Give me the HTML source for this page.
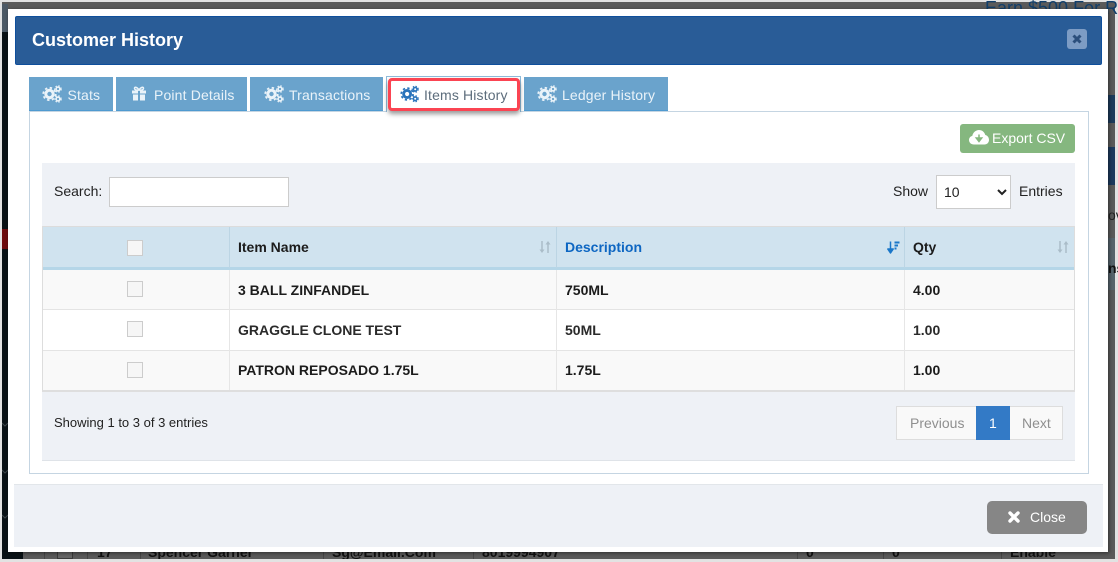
<!DOCTYPE html>
<html><head><meta charset="utf-8"><style>
html,body{margin:0;padding:0}
body{width:1118px;height:562px;position:relative;overflow:hidden;background:#e2e2e2;font-family:"Liberation Sans",sans-serif;font-size:14px;color:#222}
.a{position:absolute;box-sizing:border-box}
.t{position:absolute;white-space:nowrap;line-height:20px}
.tab{position:absolute;top:77px;height:34px;background:#6aa3cc;border-bottom:1px solid #4f9ad0;color:#eaf3f9;box-sizing:border-box}
.tab svg{position:absolute;top:8px;color:#eaf3f9}
.tab span{position:absolute;top:8px;line-height:20px;white-space:nowrap;letter-spacing:.15px}
.b{font-weight:bold;color:#1c1c1c}
.cb{position:absolute;left:127px;width:16px;height:16px;border:1px solid #ccc;background:#f6f6f6;box-sizing:border-box}
.v{position:absolute;width:1px;background:#e6e6e6}
.h{position:absolute;left:42px;width:1033px;height:1px;background:#e4e4e4}
.bl{position:absolute;top:540px;height:19px;width:1px;background:#474747}
</style></head><body>
<svg width="0" height="0" style="position:absolute"><defs>
<symbol id="g" viewBox="0 0 20 18">
<circle cx="7.500" cy="9" r="3.700" fill="none" stroke="currentColor" stroke-width="3"/>
<circle cx="7.500" cy="9" r="6.200" fill="none" stroke="currentColor" stroke-width="1.800" stroke-dasharray="2.400 2.470"/>
<circle cx="16" cy="4" r="1.900" fill="none" stroke="currentColor" stroke-width="1.600"/>
<circle cx="16" cy="4" r="3.200" fill="none" stroke="currentColor" stroke-width="1.100" stroke-dasharray="1.500 1.500"/>
<circle cx="16" cy="14" r="1.900" fill="none" stroke="currentColor" stroke-width="1.600"/>
<circle cx="16" cy="14" r="3.200" fill="none" stroke="currentColor" stroke-width="1.100" stroke-dasharray="1.500 1.500"/>
</symbol>
<symbol id="s" viewBox="0 0 12 12">
<path d="M3 0V9.500M9 12V2.500" stroke="currentColor" stroke-width="1.500" fill="none"/>
<path d="M0.500 8.500H5.500L3 12ZM6.500 3.500H11.500L9 0Z" fill="currentColor"/>
</symbol>
</defs></svg>

<!-- background page -->
<div class="a" style="left:2px;top:2px;width:1113px;height:557px;background:#5b5b5b"></div>
<div class="a" style="left:2px;top:10px;width:6px;height:549px;background:#0a1216"></div>
<div class="a" style="left:2px;top:4px;width:6px;height:28px;background:#4d5a66"></div>
<div class="a" style="left:2px;top:229px;width:6px;height:20px;background:#6e0c0e"></div>
<svg class="a" style="left:2px;top:420px" width="6" height="102"><path d="M0 3L3 6L6 3M0 50L3 53L6 50M0 95L3 98L6 95" fill="none" stroke="#3d4549" stroke-width="1"/></svg>
<div class="a" style="left:8px;top:552px;width:15px;height:7px;background:#0a1216"></div>
<div class="a" style="left:1108px;top:95px;width:7px;height:28px;background:#1c3b5c"></div>
<div class="a" style="left:1108px;top:147px;width:7px;height:38px;background:#1c3a5e"></div>
<div class="a" style="left:1108px;top:238px;width:7px;height:52px;background:#56646c"></div>
<div class="t" style="left:1108px;top:205px;color:#222">ov</div>
<div class="t" style="left:1108px;top:258px;color:#111;font-weight:bold">ns</div>
<div class="t" style="left:985px;top:-2px;font-size:18px;color:#123f6b">Earn $500 For R</div>
<div class="bl" style="left:44px"></div><div class="bl" style="left:87px"></div><div class="bl" style="left:140px"></div><div class="bl" style="left:323px"></div><div class="bl" style="left:473px"></div><div class="bl" style="left:797px"></div><div class="bl" style="left:883px"></div><div class="bl" style="left:1001px"></div>
<div class="a" style="left:57px;top:545px;width:16px;height:14px;border:1px solid #3c3c3c;background:#666"></div>
<div style="position:absolute;left:0;top:0;width:1118px;height:559px;overflow:hidden">
<div class="t b" style="left:148px;top:542px;color:#111">Spencer Garner</div>
<div class="t b" style="left:97px;top:542px;color:#111">17</div>
<div class="t b" style="left:332px;top:542px;color:#111">Sg@Email.Com</div>
<div class="t b" style="left:482px;top:542px;color:#111">8019994907</div>
<div class="t b" style="left:806px;top:542px;color:#111">0</div>
<div class="t b" style="left:892px;top:542px;color:#111">0</div>
<div class="t b" style="left:1010px;top:542px;color:#111">Enable</div>
</div>

<!-- modal -->
<div class="a" style="left:8px;top:9px;width:1100px;height:543px;background:#fff;box-shadow:1px 1px 4px rgba(0,0,0,.5)"></div>
<div class="a" style="left:15px;top:16px;width:1087px;height:49px;background:#295c97;border:1px solid #0f4f9c;border-radius:2px"></div>
<div class="t" style="left:32px;top:30px;font-size:18px;font-weight:bold;color:#fff">Customer History</div>
<div class="a" style="left:1067px;top:29px;width:20px;height:20px;background:#7d9cc4;border-radius:3px"></div>
<svg class="a" style="left:1072px;top:34px" width="10" height="10" viewBox="0 0 10 10"><path d="M1.500 1.500L8.500 8.500M8.500 1.500L1.500 8.500" stroke="#2c4f7c" stroke-width="3"/></svg>

<!-- tab panel -->
<div class="a" style="left:29px;top:111px;width:1060px;height:363px;border:1px solid #c5d5e2;background:#fff"></div>

<div class="tab" style="left:29px;width:84px"><svg style="left:13px" width="20" height="18"><use href="#g"/></svg><span style="left:38.500px">Stats</span></div>
<div class="tab" style="left:116px;width:131px"><svg style="left:15px;top:9px" width="16" height="15" viewBox="0 0 16 15"><path d="M1 4.500H7V7.500H1ZM9 4.500H15V7.500H9ZM2 8.500H7V14.500H2ZM9 8.500H14V14.500H9Z" fill="#eaf3f9"/><path d="M8 4C6 1 3.500 0.500 3.500 2.300S6 4.500 8 4C10 1 12.500 0.500 12.500 2.300S10 4.500 8 4Z" fill="none" stroke="#eaf3f9" stroke-width="1.500"/></svg><span style="left:38px">Point Details</span></div>
<div class="tab" style="left:250px;width:133px"><svg style="left:14px" width="20" height="18"><use href="#g"/></svg><span style="left:39px">Transactions</span></div>
<div class="tab" style="left:524px;width:144px"><svg style="left:13px" width="20" height="18"><use href="#g"/></svg><span style="left:38px">Ledger History</span></div>

<!-- active tab highlight -->
<div class="a" style="left:386px;top:76px;width:135px;height:36px;background:#fff;border:1px solid #8fbbda;border-bottom:none"></div>
<div class="a" style="left:388px;top:78px;width:132px;height:33px;background:#fff;border:3px solid #fb4452;border-radius:4px;box-shadow:0 3px 5px rgba(0,0,0,.4)"></div>
<svg class="a" style="left:400px;top:85px;color:#2a74bb" width="19" height="18"><use href="#g"/></svg>
<div class="t" style="left:424px;top:85px;color:#5d6d7c;letter-spacing:.15px">Items History</div>

<!-- export -->
<div class="a" style="left:960px;top:124px;width:115px;height:29px;background:#85b77f;border-radius:3px"></div>
<svg class="a" style="left:969px;top:130px" width="20" height="15" viewBox="0 0 20 15"><path d="M5 14.500C2 14.500 0 12.500 0 10C0 7.800 1.500 6.300 3.300 5.900C4 2.500 6.800 0 10 0C13 0 15.500 2 16.300 5C18.500 5.500 20 7.400 20 10C20 12.500 18 14.500 15.500 14.500Z" fill="#fff"/><path d="M10 4.500V10.500M7.300 8L10 11.500L12.700 8Z" fill="#85b77f" stroke="#85b77f" stroke-width="1.500"/></svg>
<div class="t" style="left:992px;top:128px;color:#fff">Export CSV</div>

<!-- table wrapper -->
<div class="a" style="left:42px;top:163px;width:1033px;height:298px;background:#eef1f6;border-bottom:1px solid #dfe3e8"></div>
<div class="t" style="left:54px;top:181px">Search:</div>
<div class="a" style="left:109px;top:177px;width:180px;height:30px;background:#fff;border:1px solid #ccc"></div>
<div class="t" style="left:893px;top:181px">Show</div>
<select class="a" style="left:936px;top:175px;width:75px;height:34px;background:#fff;border:1px solid #ccc;font:14px 'Liberation Sans',sans-serif;color:#222;padding:0 3px;border-radius:0"><option>10</option></select>
<div class="t" style="left:1019px;top:181px">Entries</div>

<!-- table -->
<div class="a" style="left:42px;top:226px;width:1033px;height:44px;background:#d0e3ef;border-top:1px solid #dcdcdc;border-bottom:3px solid #b5d6e8"></div>
<div class="a" style="left:42px;top:270px;width:1033px;height:40px;background:#f9f9f9"></div>
<div class="a" style="left:42px;top:310px;width:1033px;height:40px;background:#fff"></div>
<div class="a" style="left:42px;top:350px;width:1033px;height:40px;background:#f9f9f9"></div>
<div class="h" style="top:309px"></div>
<div class="h" style="top:350px"></div>
<div class="a" style="left:42px;top:390px;width:1033px;height:2px;background:#dedede"></div>
<div class="v" style="left:42px;top:226px;height:165px;background:#ddd"></div>
<div class="v" style="left:1074px;top:226px;height:165px;background:#ddd"></div>
<div class="v" style="left:229px;top:227px;height:41px;background:#bcd5e4"></div>
<div class="v" style="left:556px;top:227px;height:41px;background:#bcd5e4"></div>
<div class="v" style="left:904px;top:227px;height:41px;background:#bcd5e4"></div>
<div class="v" style="left:229px;top:270px;height:120px"></div>
<div class="v" style="left:556px;top:270px;height:120px"></div>
<div class="v" style="left:904px;top:270px;height:120px"></div>

<div class="cb" style="top:240px"></div>
<div class="cb" style="top:281px"></div>
<div class="cb" style="top:321px"></div>
<div class="cb" style="top:362px"></div>

<div class="t b" style="left:238px;top:237px">Item Name</div>
<div class="t" style="left:565px;top:237px;font-weight:bold;color:#0d66c2">Description</div>
<div class="t b" style="left:913px;top:237px">Qty</div>
<svg class="a" style="left:539px;top:241px;color:#aabcc8" width="12" height="12"><use href="#s"/></svg>
<svg class="a" style="left:1057px;top:241px;color:#aabcc8" width="12" height="12"><use href="#s"/></svg>
<svg class="a" style="left:887px;top:241px" width="13" height="13" viewBox="0 0 13 13"><path d="M3.500 0.500V9M0.800 8L3.500 12L6.200 8Z" fill="#1a77c9" stroke="#1a77c9" stroke-width="1.500" stroke-linejoin="round"/><path d="M7.500 1.500H12.500M7.500 4.500H11M7.500 7.500H9.500" stroke="#1a77c9" stroke-width="2"/></svg>

<div class="t b" style="left:238px;top:280px">3 BALL ZINFANDEL</div>
<div class="t b" style="left:565px;top:280px">750ML</div>
<div class="t b" style="left:913px;top:280px">4.00</div>
<div class="t b" style="left:238px;top:320px;color:#2a2a2a">GRAGGLE CLONE TEST</div>
<div class="t b" style="left:565px;top:320px;color:#2a2a2a">50ML</div>
<div class="t b" style="left:913px;top:320px;color:#2a2a2a">1.00</div>
<div class="t b" style="left:238px;top:360px">PATRON REPOSADO 1.75L</div>
<div class="t b" style="left:565px;top:360px">1.75L</div>
<div class="t b" style="left:913px;top:360px">1.00</div>

<div class="t" style="left:54px;top:413px;font-size:13px">Showing 1 to 3 of 3 entries</div>

<!-- pagination -->
<div class="a" style="left:896px;top:406px;width:167px;height:34px;background:#f9f9f9;border:1px solid #ddd"></div>
<div class="a" style="left:976px;top:406px;width:34px;height:34px;background:#337ac6"></div>
<div class="t" style="left:910px;top:413px;color:#8f8f8f">Previous</div>
<div class="t" style="left:989px;top:413px;color:#fff">1</div>
<div class="t" style="left:1022px;top:413px;color:#8f8f8f">Next</div>

<!-- modal footer -->
<div class="a" style="left:14px;top:484px;width:1089px;height:63px;background:#eef1f6;border-top:1px solid #e2e6ea"></div>
<div class="a" style="left:987px;top:501px;width:100px;height:33px;background:#868686;border-radius:5px"></div>
<svg class="a" style="left:1008px;top:511px" width="12" height="12" viewBox="0 0 12 12"><path d="M2 2L10 10M10 2L2 10" stroke="#fff" stroke-width="3.400" stroke-linecap="round"/></svg>
<div class="t" style="left:1030px;top:507px;color:#fff">Close</div>
</body></html>
